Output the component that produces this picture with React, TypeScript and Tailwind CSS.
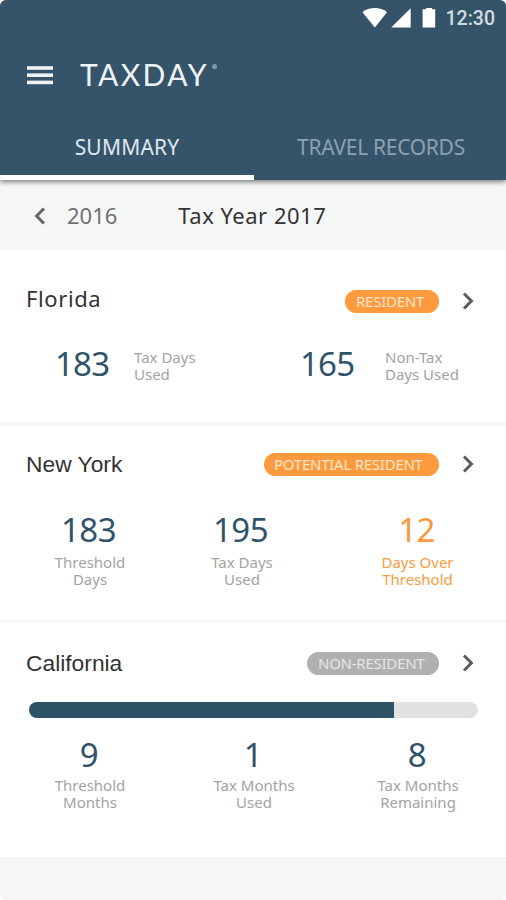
import { clsx } from "clsx";

// --- TYPE DEFINITIONS ---
interface Stat {
  value: string;
  label: [string, string];
  valueClass?: string;
  highlight?: boolean;
}

interface HeadingProps {
  name: string;
  nameClass: string;
  badge: string;
  badgeClass: string;
}

const MenuIcon = () => (
  <svg width="26" height="19" viewBox="0 0 26 19" fill="#eef3f6">
    <rect y="0.2" width="26" height="3.6" />
    <rect y="7.4" width="26" height="3.6" />
    <rect y="14.6" width="26" height="3.6" />
  </svg>
);

const StatusIcons = () => (
  <svg width="74" height="21" viewBox="0 0 74 21" fill="#fff">
    <path d="M0.5 4.3C7 -1.3 18.5 -1.3 25 4.3L12.8 19.4Z" />
    <path d="M48.7 0.3V19.6H29.2Z" />
    <path d="M64 0h6v1.3h3.2v18.3H60.6V1.3H64z" />
  </svg>
);

const Chevron = ({ left }: { left?: boolean }) => (
  <svg
    width="12"
    height="18"
    viewBox="0 0 12 18"
    fill="none"
    stroke={left ? "#666" : "#5c5c5c"}
    strokeWidth="3"
    className={clsx("shrink-0", left && "mt-0.5 rotate-180")}
  >
    <path d="M2 1.5L9.4 9L2 16.5" />
  </svg>
);

function CardHeading({ name, nameClass, badge, badgeClass }: HeadingProps) {
  return (
    <div className="flex h-6 items-center pl-[26px] pr-8">
      <h2 className={clsx("flex-1 whitespace-nowrap text-[#333]", nameClass)}>
        {name}
      </h2>
      <span
        className={clsx(
          "flex h-[23px] items-center rounded-full text-[15px] leading-[23px] tracking-[-0.25px] whitespace-nowrap",
          badgeClass,
        )}
      >
        {badge}
      </span>
      <span className="ml-[23px] flex">
        <Chevron />
      </span>
    </div>
  );
}

function StatColumn({ value, label, valueClass, highlight }: Stat) {
  return (
    <div
      className={clsx(
        "flex flex-col items-center text-center",
        highlight ? "text-[#fb9a3c]" : "text-[#a3a3a3]",
      )}
    >
      <span
        className={clsx(
          "text-[33px] leading-10 tracking-[-0.6px]",
          !highlight && "text-[#2f5469]",
          valueClass,
        )}
      >
        {value}
      </span>
      <span className="mt-1 text-[15px] leading-[17px] whitespace-nowrap">
        {label[0]}
        <br />
        {label[1]}
      </span>
    </div>
  );
}

const newYork: Stat[] = [
  { value: "183", label: ["Threshold", "Days"], valueClass: "mr-[3px]" },
  { value: "195", label: ["Tax Days", "Used"], valueClass: "mr-[3px]" },
  {
    value: "12",
    label: ["Days Over", "Threshold"],
    valueClass: "mr-[2px]",
    highlight: true,
  },
];

// the month figures sit a little closer to their labels
const california: Stat[] = [
  {
    value: "9",
    label: ["Threshold", "Months"],
    valueClass: "mr-[2px] -mb-[2px]",
  },
  {
    value: "1",
    label: ["Tax Months", "Used"],
    valueClass: "mr-[2px] -mb-[2px]",
  },
  {
    value: "8",
    label: ["Tax Months", "Remaining"],
    valueClass: "mr-[2px] -mb-[2px]",
  },
];

const progress = { filled: 365, total: 449 };

export default function App() {
  return (
    <div className="bg-white">
      <div className="flex h-[900px] w-[506px] flex-col overflow-hidden rounded-[6px] bg-[#f5f7f7] font-['Noto_Sans',sans-serif]">
        {/* 1. HEADER */}
        <header className="relative z-10 h-[180px] shrink-0 bg-[#355469] shadow-[0_2px_5px_rgba(0,0,0,0.5)]">
          <div className="flex h-9 items-center justify-end pr-[11px]">
            <StatusIcons />
            <span className="ml-[10px] pt-0.5 font-['Roboto',sans-serif] text-[19.5px] leading-[34px] font-medium text-[#d3dce2]">
              12:30
            </span>
          </div>

          <div className="flex h-[78px] items-center pl-[27px]">
            <MenuIcon />
            <h1 className="mb-0.5 ml-[27px] font-['Lato',sans-serif] text-[30px] leading-10 tracking-[2.4px] text-[#eef3f6]">
              TAXDAY
            </h1>
            <span className="mb-[18px] ml-[3px] size-[5px] rounded-full bg-[#8199aa]" />
          </div>

          <nav className="grid h-[66px] grid-cols-[254px_252px] text-center text-[21px] leading-[60px]">
            <span className="h-[66px] border-b-[5px] border-white pt-[3px] tracking-[0.2px] text-[#dfe8ee]">
              SUMMARY
            </span>
            <span className="pt-[3px] pl-[2px] tracking-[-0.3px] text-[#8aa1b3]">
              TRAVEL RECORDS
            </span>
          </nav>
        </header>

        {/* 2. YEAR PICKER */}
        <div className="flex h-[70px] shrink-0 items-center pl-[34px] text-[22px]">
          <Chevron left />
          <span className="ml-[21px] text-[#707070]">2016</span>
          <span className="ml-[61px] tracking-[0.5px] text-[#333]">
            Tax Year 2017
          </span>
        </div>

        {/* 3. STATE CARDS */}
        <section className="h-[172px] shrink-0 bg-white pt-[39px]">
          <CardHeading
            name="Florida"
            nameClass="mb-1.5 text-[22px] tracking-[0.6px]"
            badge="RESIDENT"
            badgeClass="w-[94px] bg-[#fd9a3d] pl-[11px] text-[#ffe6cb]"
          />
          <div className="mt-[31px] flex h-10 items-center pl-[55px]">
            <span className="w-[79px] text-[33px] leading-10 tracking-[-0.8px] text-[#2f5469]">
              183
            </span>
            <span className="mt-1 w-[166px] text-[15px] leading-[17px] text-[#a3a3a3]">
              Tax Days
              <br />
              Used
            </span>
            <span className="w-[85px] text-[33px] leading-10 tracking-[-0.8px] text-[#2f5469]">
              165
            </span>
            <span className="mt-1 text-[15px] leading-[17px] text-[#a3a3a3]">
              Non-Tax
              <br />
              Days Used
            </span>
          </div>
        </section>

        <section className="mt-1 h-[193px] shrink-0 bg-white pt-[26px]">
          <CardHeading
            name="New York"
            nameClass="font-['Liberation_Sans',sans-serif] text-[22.8px]"
            badge="POTENTIAL RESIDENT"
            badgeClass="w-[175px] bg-[#fd9a3d] pl-[10px] text-[#ffe6cb]"
          />
          <div className="mt-[34px] grid grid-cols-[102px_202px_149px] pl-[39px]">
            {newYork.map((stat) => (
              <StatColumn key={stat.label.join(" ")} {...stat} />
            ))}
          </div>
        </section>

        <section className="mt-1 h-[234px] shrink-0 bg-white pt-[28px]">
          <CardHeading
            name="California"
            nameClass="font-['Liberation_Sans',sans-serif] text-[22.8px]"
            badge="NON-RESIDENT"
            badgeClass="w-[132px] bg-[#b0b0b0] pl-[11px] text-[#e4e4e4]"
          />
          <div className="mt-[27px] ml-[29px] h-4 w-[449px] overflow-hidden rounded-full bg-[#e1e1e1]">
            <div
              className="h-full bg-[#305267]"
              style={{ width: `${(progress.filled / progress.total) * 100}%` }}
            />
          </div>
          <div className="mt-[17px] grid grid-cols-[102px_226px_102px] pl-[39px]">
            {california.map((stat) => (
              <StatColumn key={stat.label.join(" ")} {...stat} />
            ))}
          </div>
        </section>
      </div>
    </div>
  );
}
